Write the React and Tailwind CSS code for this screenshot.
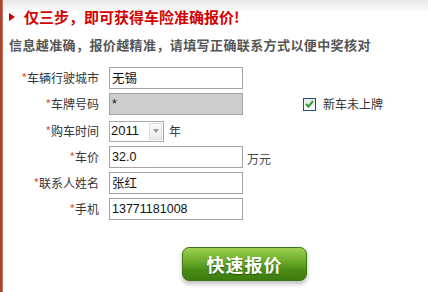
import React from "react";

const cjk = { fontFamily: '"Noto Sans CJK SC", "Liberation Sans", sans-serif' };
const num = { fontFamily: '"Liberation Sans", "Noto Sans CJK SC", sans-serif' };

function Row({ label, children, className = "" }) {
  return (
    <div className={"flex items-center h-[22px] " + className}>
      <div className="w-[96px] text-right text-[12px] leading-[22px] text-[#333]" style={cjk}>
        <span className="text-[#e5512f]">*</span>
        {label}
      </div>
      <div className="ml-[10px] flex items-center">{children}</div>
    </div>
  );
}

function Input({ value, gray = false, font = num }) {
  return (
    <div
      className={
        "w-[134px] h-[22px] border border-[#a3a3a3] flex items-center pl-[2px] text-[12.5px] text-[#111] " +
        (gray ? "bg-[#cccccc]" : "bg-white")
      }
      style={font}
    >
      {value}
    </div>
  );
}

export default function App() {
  return (
    <div className="w-[428px] h-[292px] flex bg-white overflow-hidden">
      <div className="w-[3px] h-full bg-[#a9452f] border-r border-[#c9705c]" />
      <div className="flex-1 flex flex-col bg-[linear-gradient(#e6e6e6,#ffffff_13px)]">
        <div className="flex items-center h-[20px] mt-[7px] pl-[6px]">
          <div className="w-0 h-0 border-y-[4px] border-y-transparent border-l-[6px] border-l-[#c40000]" />
          <div className="ml-[9px] text-[15px] font-bold text-[#d40000] leading-[20px]" style={cjk}>
            仅三步，即可获得车险准确报价!
          </div>
        </div>
        <div
          className="mt-[9px] pl-[6px] h-[18px] leading-[18px] text-[13px] font-bold text-[#555] tracking-[0.4px]"
          style={cjk}
        >
          信息越准确，报价越精准，请填写正确联系方式以便中奖核对
        </div>

        <div className="mt-[13px] flex flex-col gap-[4px]">
          <Row label="车辆行驶城市">
            <Input value="无锡" font={cjk} />
          </Row>
          <Row label="车牌号码">
            <Input value="*" gray />
            <div className="ml-[60px] flex items-center">
              <div className="w-[13px] h-[13px] border border-[#1f4f7a] bg-[linear-gradient(#e8e8e8,#ffffff)] flex items-center justify-center">
                <svg width="9" height="8" viewBox="0 0 9 8">
                  <path d="M1 4 L3.5 6.5 L8 1.2" stroke="#2f9a2f" strokeWidth="2" fill="none" />
                </svg>
              </div>
              <span className="ml-[7px] text-[12px] text-[#333]" style={cjk}>
                新车未上牌
              </span>
            </div>
          </Row>
          <Row label="购车时间" className="mt-[1px]">
            <div className="w-[55px] h-[21px] border border-[#a9a9a9] bg-white flex items-center justify-between pl-[1px] pr-[1px]">
              <span className="text-[13px] text-[#111]" style={num}>
                2011
              </span>
              <div className="w-[13px] h-[17px] border border-[#dcdcdc] bg-[linear-gradient(#fdfdfd,#e9e9e9)] flex items-center justify-center">
                <div className="w-0 h-0 border-x-[3px] border-x-transparent border-t-[4px] border-t-[#9a9a9a]" />
              </div>
            </div>
            <span className="ml-[5px] text-[12px] text-[#333]" style={cjk}>
              年
            </span>
          </Row>
          <Row label="车价">
            <Input value="32.0" />
            <span className="ml-[4px] mt-[4px] text-[12px] text-[#444]" style={cjk}>
              万元
            </span>
          </Row>
          <Row label="联系人姓名">
            <Input value="张红" font={cjk} />
          </Row>
          <Row label="手机">
            <Input value="13771181008" />
          </Row>
        </div>

        <div className="mt-[27px] ml-[179px]">
          <div className="w-[125px] h-[34px] rounded-[7px] border border-[#3d7414] bg-[linear-gradient(#9ccf4e,#68a829_45%,#4a8c17_70%,#3c7a0e)] shadow-[0_3px_4px_rgba(0,0,0,0.25)] flex items-center justify-center">
            <span
              className="text-[18px] font-bold text-white tracking-[1px] [text-shadow:0_1px_1px_rgba(0,60,0,0.6)]"
              style={cjk}
            >
              快速报价
            </span>
          </div>
        </div>
      </div>
    </div>
  );
}
